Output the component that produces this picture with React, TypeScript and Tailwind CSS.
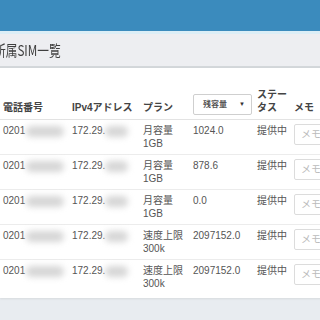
import React from 'react'

const font = { fontFamily: '"Liberation Sans", "Noto Sans CJK JP", sans-serif' }

type Row = { plan: [string, string]; remain: string }

const rows: Row[] = [
  { plan: ['月容量', '1GB'], remain: '1024.0' },
  { plan: ['月容量', '1GB'], remain: '878.6' },
  { plan: ['月容量', '1GB'], remain: '0.0' },
  { plan: ['速度上限', '300k'], remain: '2097152.0' },
  { plan: ['速度上限', '300k'], remain: '2097152.0' },
]

// 列幅 (左端からの位置に合わせる)
const cols = 'grid grid-cols-[69px_71px_50px_64px_37px_60px]'

function Blur({ w }: { w: string }) {
  return <span className={`inline-block h-[11px] ${w} rounded-full bg-[#d6d6d6] blur-[3px] align-middle`} />
}

export default function App() {
  return (
    <div className="w-[320px] h-[320px] overflow-hidden bg-[#e8ecf0] relative" style={font}>
      <div className="h-[31px] bg-[#3b8bbd]" />
      <div className="h-[3px] bg-[#dceef6]" />
      <div className="h-[34px] bg-[#edeef1] border-b-2 border-[#d3d7da] flex items-center">
        <h1
          className="ml-[-6px] text-[15px] text-[#3f3f3f] whitespace-nowrap scale-x-[0.78] origin-left"
          style={{ fontFamily: '"Noto Sans CJK JP", sans-serif' }}
        >
          所属SIM一覧
        </h1>
      </div>

      <div className="bg-white w-[340px] pb-[3px] shadow-[0_1px_2px_rgba(0,0,0,0.08)]">
        {/* ヘッダー */}
        <div className={`${cols} h-[52px] items-end border-b border-[#e3e3e3] text-[10px] font-bold text-[#444] leading-[13px]`}>
          <div className="pl-[3px] pb-[5px]">電話番号</div>
          <div className="pl-[3px] pb-[5px]">IPv4アドレス</div>
          <div className="pl-[3px] pb-[5px]">プラン</div>
          <div className="pl-[3px] pb-[4px]">
            <div className="w-[59px] h-[21px] border border-[#cfcfcf] rounded-[2px] flex items-center pl-[9px] pr-[6px] text-[8px] font-bold text-[#555]">
              <span>残容量</span>
              <span className="ml-auto text-[6px] text-[#333]">▼</span>
            </div>
          </div>
          <div className="pl-[3px] pb-[5px]">
            ステー
            <br />
            タス
          </div>
          <div className="pl-[3px] pb-[5px]">メモ</div>
        </div>

        {rows.map((r, i) => (
          <div
            key={i}
            className={`${cols} h-[35px] text-[10px] text-[#555] leading-[13px] ${i < rows.length - 1 ? 'border-b border-[#ececec]' : ''}`}
          >
            <div className="pl-[3px] pt-[4px] whitespace-nowrap">
              0201<Blur w="w-[38px] ml-[1px]" />
            </div>
            <div className="pl-[3px] pt-[4px] whitespace-nowrap">
              172.29.<Blur w="w-[23px]" />
            </div>
            <div className="pl-[3px] pt-[4px] whitespace-nowrap">
              {r.plan[0]}
              <br />
              {r.plan[1]}
            </div>
            <div className="pl-[3px] pt-[4px]">{r.remain}</div>
            <div className="pl-[3px] pt-[4px] whitespace-nowrap">提供中</div>
            <div className="pl-[3px] pt-[4px]">
              <div className="h-[21px] w-[50px] border border-[#dcdcdc] rounded-[2px] flex items-center pl-[6px] text-[10px] text-[#bbb] whitespace-nowrap overflow-hidden">
                メモ欄
              </div>
            </div>
          </div>
        ))}
      </div>
    </div>
  )
}
